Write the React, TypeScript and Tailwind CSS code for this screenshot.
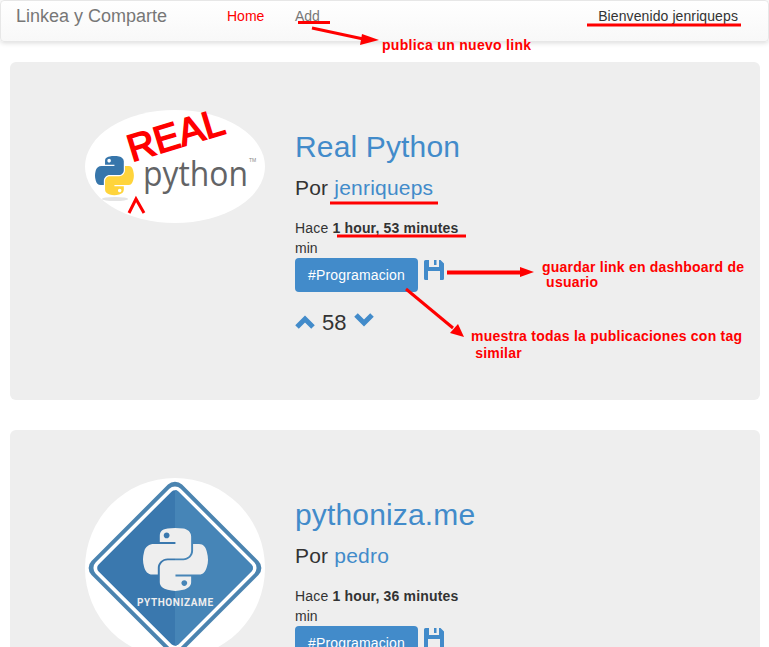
const PY_BLUE =
  'M54.9 0c-4.6 0-9 .4-12.8 1.1C30.8 3.1 28.7 7.3 28.7 15v10.2h26.8v3.4H18.6c-7.8 0-14.6 4.7-16.7 13.6-2.5 10.2-2.6 16.6 0 27.3 1.9 7.9 6.5 13.6 14.2 13.6h9.2V71c0-8.9 7.7-16.7 16.8-16.7h26.8c7.5 0 13.4-6.1 13.4-13.6V15c0-7.3-6.1-12.7-13.4-13.9C64.3.3 59.5 0 54.9 0zM40.4 8.2c2.8 0 5 2.3 5 5.1 0 2.8-2.3 5.1-5 5.1-2.8 0-5-2.3-5-5.1 0-2.8 2.3-5.1 5-5.1z';
const PY_YELLOW =
  'M85.6 28.7v11.9c0 9.2-7.8 17-16.7 17H42.1c-7.3 0-13.4 6.3-13.4 13.6v25.5c0 7.3 6.3 11.5 13.4 13.6 8.5 2.5 16.6 2.9 26.8 0 6.7-2 13.4-5.9 13.4-13.6V86.5H55.5v-3.4h40.2c7.8 0 10.7-5.4 13.4-13.6 2.8-8.4 2.7-16.5 0-27.3-1.9-7.8-5.6-13.6-13.4-13.6H85.6zM70.6 93.3c2.8 0 5 2.3 5 5.1 0 2.8-2.3 5.1-5 5.1-2.8 0-5-2.3-5-5.1 0-2.8 2.3-5.1 5-5.1z';

function RealPythonLogo() {
  return (
    <svg width="180" height="113" viewBox="0 0 180 113" className="block">
      <ellipse cx="90" cy="56.5" rx="90" ry="56.5" fill="#fff" />
      <g transform="translate(10 46) scale(0.35)">
        <path d={PY_BLUE} fill="#3776ab" />
        <path d={PY_YELLOW} fill="#ffd43b" />
      </g>
      <ellipse cx="30" cy="89" rx="13" ry="2" fill="#e4e4e4" />
      <text x="58" y="76" fontSize="35" fill="#636466" textLength="105" lengthAdjust="spacingAndGlyphs" fontFamily="'Open Sans', sans-serif">
        python
      </text>
      <text x="164" y="52" fontSize="5" fill="#888" fontFamily="'Liberation Sans', sans-serif">TM</text>
      <text
        x="47"
        y="52"
        fontSize="38"
        fill="#f00"
        stroke="#f00"
        strokeWidth="1.6"
        transform="rotate(-17 47 52)"
        fontFamily="'Liberation Sans', sans-serif"
      >
        REAL
      </text>
      <polyline points="44,103 51,89 59,103" fill="none" stroke="#f00" strokeWidth="3" />
    </svg>
  );
}

function PythonizameLogo() {
  return (
    <svg width="180" height="180" viewBox="0 0 180 180" className="block">
      <defs>
        <clipPath id="right-half">
          <rect x="90" y="0" width="90" height="180" />
        </clipPath>
      </defs>
      <circle cx="90" cy="90" r="90" fill="#fff" />
      <rect x="26" y="26" width="128" height="128" rx="10" fill="#4b84b0" transform="rotate(45 90 90)" />
      <rect x="30" y="30" width="120" height="120" rx="8" fill="#fff" transform="rotate(45 90 90)" />
      <rect x="33.5" y="33.5" width="113" height="113" rx="5" fill="#3a78ae" transform="rotate(45 90 90)" />
      <g clipPath="url(#right-half)">
        <rect x="33.5" y="33.5" width="113" height="113" rx="5" fill="#4685b7" transform="rotate(45 90 90)" />
      </g>
      <g transform="translate(58 50) scale(0.585 0.56)">
        <path d={PY_BLUE} fill="#eeeeee" />
        <path d={PY_YELLOW} fill="#eeeeee" />
      </g>
      <text
        x="90"
        y="128"
        textAnchor="middle"
        fontSize="10"
        fontWeight="700"
        fill="#eeeeee"
        textLength="76"
        fontFamily="'Roboto', sans-serif"
      >
        PYTHONIZAME
      </text>
    </svg>
  );
}

function SaveIcon() {
  return (
    <svg width="20" height="20" viewBox="0 0 20 20" className="block" fill="#428bca">
      <path fillRule="evenodd" d="M0 1.5A1.5 1.5 0 0 1 1.5 0H16.5L20 3.5V18.5A1.5 1.5 0 0 1 18.5 20H1.5A1.5 1.5 0 0 1 0 18.5ZM5 0V7H15V0H12.5V5H10V0ZM4 11V20H16V11Z" />
    </svg>
  );
}

function Chevron({ up }: { up?: boolean }) {
  return (
    <svg width="20" height="14" viewBox="0 0 20 14" className="block">
      <polyline points={up ? '2,12 10,4 18,12' : '2,2 10,10 18,2'} fill="none" stroke="#428bca" strokeWidth="5" />
    </svg>
  );
}

function PostCard({ title, author, ago, logo }: { title: string; author: string; ago: string; logo: React.ReactNode }) {
  return (
    <div className="bg-[#eeeeee] rounded-md pt-12 pl-[75px] flex gap-[30px] h-[338px]">
      <div className="w-[180px] shrink-0">{logo}</div>
      <div className="pt-[20px]">
        <h2 className="text-[30px] leading-[33px] tracking-[0.15px] text-[#428bca]">{title}</h2>
        <h3 className="text-[21px] leading-[23px] tracking-[0.2px] mt-[13px] text-[#333]">
          Por <a className="text-[#428bca]">{author}</a>
        </h3>
        <p className="mt-[19px] text-sm leading-5 tracking-[0.17px] text-[#333] whitespace-nowrap">
          Hace <b>{ago}</b>
        </p>
        <p className="text-sm leading-5 text-[#333]">min</p>
        <div className="flex items-start gap-[6px]">
          <button className="h-[34px] w-[123px] bg-[#428bca] rounded text-sm tracking-[0.15px] text-white">#Programacion</button>
          <div className="pt-[2px]">
            <SaveIcon />
          </div>
        </div>
        <div className="flex items-center mt-[14px] h-8">
          <div className="mt-[-1px]">
            <Chevron up />
          </div>
          <span className="text-[22px] text-[#333] w-[39px] pl-[7px]">58</span>
          <div className="-mt-[5px]">
            <Chevron />
          </div>
        </div>
      </div>
    </div>
  );
}

export default function App() {
  return (
    <div className="relative h-[647px] overflow-hidden bg-white font-['Liberation_Sans',Arial,sans-serif]">
      <nav className="h-[42px] flex items-start pt-[5px] text-sm leading-5 border border-[#e7e7e7] rounded bg-gradient-to-b from-white to-[#f8f8f8] shadow-[0_1px_5px_rgba(0,0,0,0.15)]">
        <a className="ml-[15px] text-lg leading-5 text-[#777] w-[211px]">Linkea y Comparte</a>
        <a className="text-[#f00] w-[68px]">Home</a>
        <a className="text-[#777]">Add</a>
        <span className="ml-auto mr-[30px] tracking-[0.1px] text-[#333]">Bienvenido jenriqueps</span>
      </nav>

      <div className="pl-[10px] pr-[9px] pt-5 flex flex-col gap-[30px]">
        <PostCard title="Real Python" author="jenriqueps" ago="1 hour, 53 minutes" logo={<RealPythonLogo />} />
        <PostCard title="pythoniza.me" author="pedro" ago="1 hour, 36 minutes" logo={<PythonizameLogo />} />
      </div>

      {/* red notes drawn over the screenshot */}
      <svg className="absolute inset-0 pointer-events-none" width="769" height="647" viewBox="0 0 769 647">
        <g stroke="#f00" fill="none">
          <path d="M298 22.5H330" strokeWidth="3" />
          <path d="M587 25H741" strokeWidth="3" />
          <path d="M312 28L368 40" strokeWidth="3" />
          <path d="M330 203H438" strokeWidth="3" />
          <path d="M337 236H466" strokeWidth="3" />
          <path d="M447 272.5H522" strokeWidth="4" />
          <path d="M406 289L453 328" strokeWidth="3" />
        </g>
        <g fill="#f00">
          <path d="M379 40L362 34L360 45Z" />
          <path d="M534 272L520 267V277Z" />
          <path d="M464 337L450 333L458 324Z" />
        </g>
      </svg>
      <p className="absolute left-[382px] top-[37px] text-sm leading-4 tracking-[0.3px] font-bold text-[#f00]">publica un nuevo link</p>
      <p className="absolute left-[542px] top-[260px] text-sm leading-[15px] tracking-[0.22px] font-bold text-[#f00] whitespace-pre">{'guardar link en dashboard de\n usuario'}</p>
      <p className="absolute left-[471px] top-[328px] text-sm leading-[17px] tracking-[0.24px] font-bold text-[#f00] whitespace-pre">{'muestra todas la publicaciones con tag\n similar'}</p>
    </div>
  );
}
